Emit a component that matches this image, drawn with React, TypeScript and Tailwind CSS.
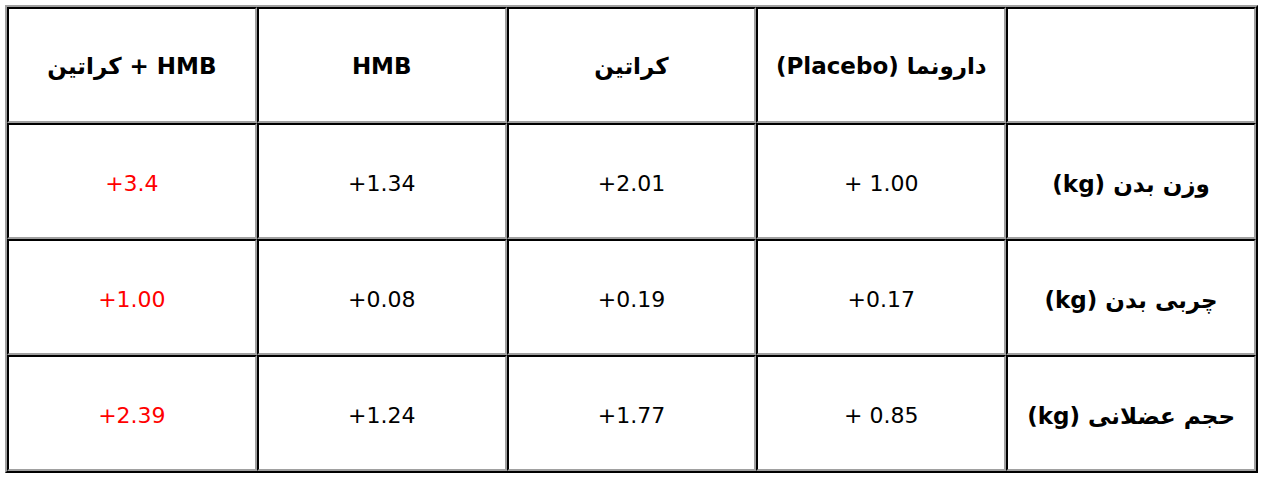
import React from "react";

const rows = [
  { label: "وزن بدن (kg)", vals: ["+ 1.00", "+2.01", "+1.34", "+3.4"] },
  { label: "چربی بدن (kg)", vals: ["+0.17", "+0.19", "+0.08", "+1.00"] },
  { label: "حجم عضلانی (kg)", vals: ["+ 0.85", "+1.77", "+1.24", "+2.39"] },
];

const cell =
  "border-2 border-t-black border-l-black border-b-[#a0a0a0] border-r-[#a0a0a0] h-[116px] p-0 text-center align-middle";
const bold = " font-bold text-[23px] pt-[2px]";

export default function App() {
  return (
    <div className="bg-white w-[1264px] h-[480px] pt-[5px] pl-[5px]" style={{ fontFamily: '"DejaVu Sans", Verdana, sans-serif' }}>
      <table
        dir="rtl"
        className="w-[1253px] table-fixed border-separate border-spacing-0 border-2 border-t-[#a0a0a0] border-l-[#a0a0a0] border-b-black border-r-black text-[22px] text-black"
      >
        <tbody>
          <tr>
            <td className={cell}></td>
            <td className={cell + bold}>دارونما (Placebo)</td>
            <td className={cell + bold}>کراتین</td>
            <td className={cell + bold}>HMB</td>
            <td className={cell + bold}>HMB + کراتین</td>
          </tr>
          {rows.map((r) => (
            <tr key={r.label}>
              <td className={cell + bold + " pt-[6px]"}>{r.label}</td>
              {r.vals.map((v, i) => (
                <td key={i} className={cell + " pt-[4px]" + (i === 3 ? " text-[#ff0000]" : "")}>
                  <span dir="ltr">{v}</span>
                </td>
              ))}
            </tr>
          ))}
        </tbody>
      </table>
    </div>
  );
}
